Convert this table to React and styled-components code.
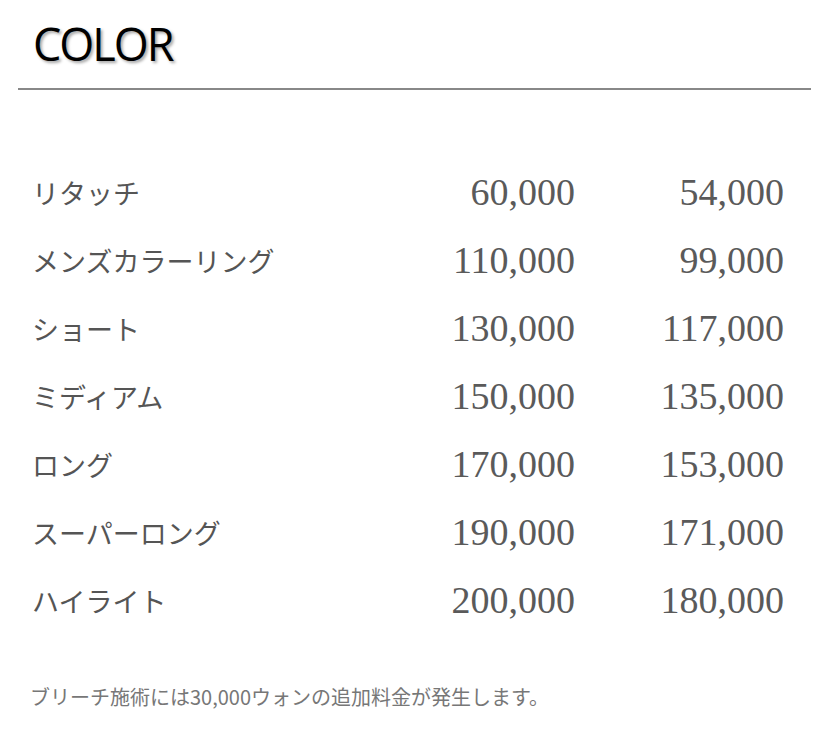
import React from 'react'
import styled, { createGlobalStyle } from 'styled-components'

const GlobalStyle = createGlobalStyle`
    body{
        margin:0;
        background:#fff;
    }
`;

const prices = [
    { name: 'リタッチ', regular: '60,000', member: '54,000' },
    { name: 'メンズカラーリング', regular: '110,000', member: '99,000' },
    { name: 'ショート', regular: '130,000', member: '117,000' },
    { name: 'ミディアム', regular: '150,000', member: '135,000' },
    { name: 'ロング', regular: '170,000', member: '153,000' },
    { name: 'スーパーロング', regular: '190,000', member: '171,000' },
    { name: 'ハイライト', regular: '200,000', member: '180,000' },
]

const App = () => {
  return (
    <Cover>
        <GlobalStyle/>
        <Header>
            <h2>COLOR</h2>
        </Header>
        <PriceList>
            {prices.map((item)=>(
                <Row key={item.name}>
                    <Name>{item.name}</Name>
                    <Price>{item.regular}</Price>
                    <Price>{item.member}</Price>
                </Row>
            ))}
        </PriceList>
        <Note>ブリーチ施術には30,000ウォンの追加料金が発生します。</Note>
    </Cover>
  )
}

export default App
const Cover = styled.div`
    width:793px;
    margin-left:18px;
    padding-top:14px;
`;
const Header = styled.div`
    border-bottom:2px solid #888;
    padding:0px 15px 14px;
    h2{
        margin:0;
        font-family:"Open Sans", sans-serif;
        font-weight:400;
        font-size:45px;
        line-height:60px;
        letter-spacing:-2px;
        color:#000;
        text-shadow:2px 2px 3px rgba(0,0,0,0.35);
    }
`;
const PriceList = styled.div`
    padding:68px 27px 0px 14px;
`;
const Row = styled.div`
    display:grid;
    grid-template-columns:1fr 190px 209px;
    align-items:center;
    height:68px;
`;
const Name = styled.div`
    font-family:"Noto Sans CJK JP", sans-serif;
    font-size:27px;
    color:#555;
`;
const Price = styled.div`
    font-family:"Liberation Serif", serif;
    font-size:38px;
    color:#5a5a5a;
    text-align:right;
`;
const Note = styled.p`
    margin:48px 0px 0px 12px;
    font-family:"Noto Sans CJK JP", sans-serif;
    font-size:20px;
    color:#777;
`;
